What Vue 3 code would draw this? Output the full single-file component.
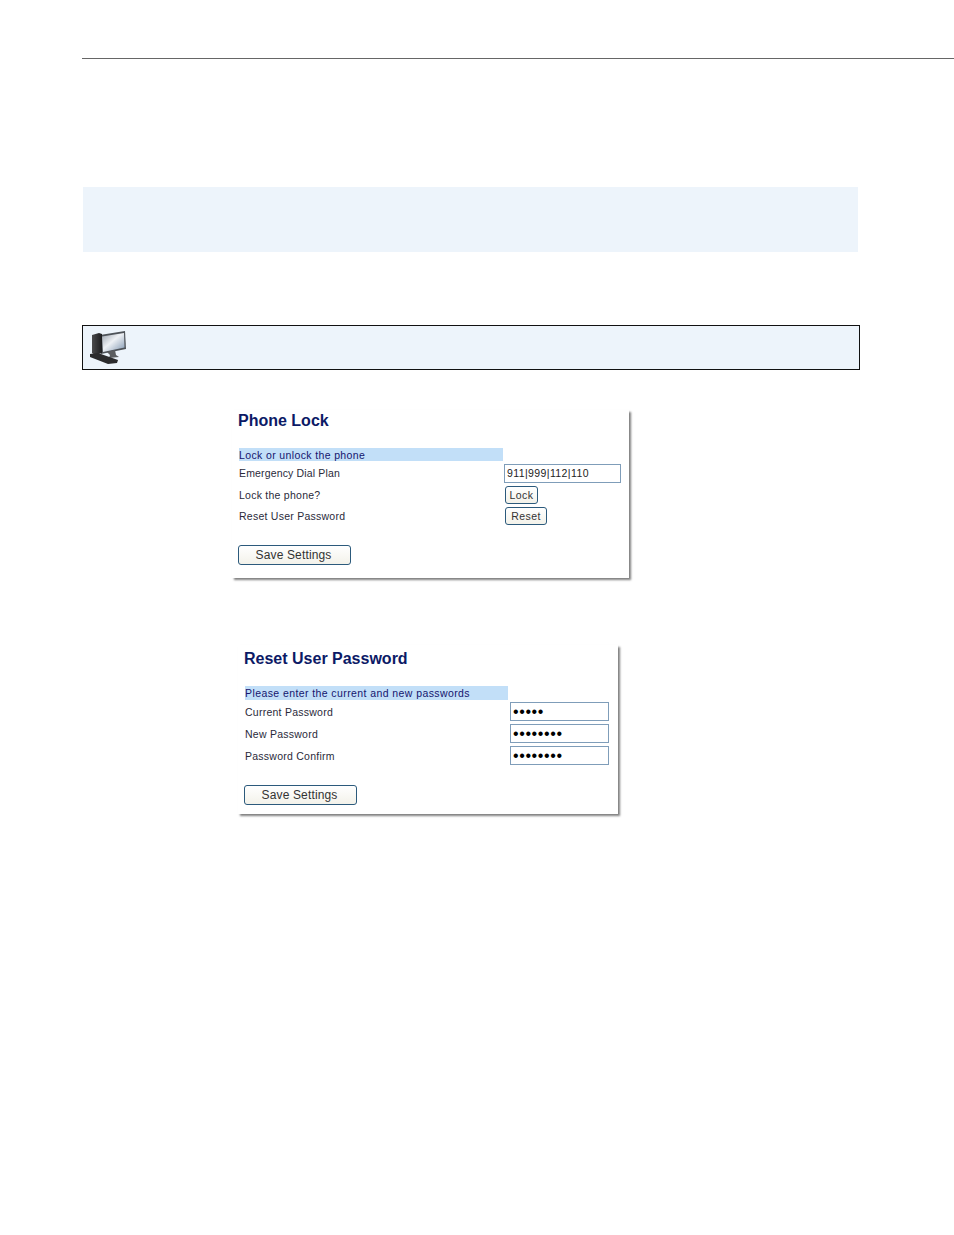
<script setup>
const lockRows = [
  { label: 'Lock the phone?', button: 'Lock', cls: 'btn-lock' },
  { label: 'Reset User Password', button: 'Reset', cls: 'btn-reset' }
]

const passwordRows = [
  { label: 'Current Password', value: '•••••' },
  { label: 'New Password', value: '••••••••' },
  { label: 'Password Confirm', value: '••••••••' }
]
</script>

<template>
  <div class="page">
    <div class="rule"></div>
    <div class="band"></div>
    <div class="note">
      <svg class="note-icon" width="38" height="36" viewBox="0 0 38 36">
        <defs>
          <linearGradient id="screen" x1="0" y1="0" x2="1" y2="1">
            <stop offset="0" stop-color="#9aa2ad" />
            <stop offset="0.45" stop-color="#eef1f5" />
            <stop offset="1" stop-color="#7f95b0" />
          </linearGradient>
          <linearGradient id="tower" x1="0" y1="0" x2="1" y2="0">
            <stop offset="0" stop-color="#4a4a4c" />
            <stop offset="1" stop-color="#1d1d1f" />
          </linearGradient>
        </defs>
        <path d="M10 5 L35 1 L36 19 L11 24 Z" fill="#4d5258" />
        <path d="M12 6.500 L34 3 L34.500 17.500 L13 22 Z" fill="url(#screen)" />
        <path d="M2 5 L9 3 L12 4 L12 23 L5 25 L2 23 Z" fill="url(#tower)" />
        <path d="M17 22 L25 20 L26 25 L29 27 L19 28 L20 25 Z" fill="#5b5d60" />
        <path d="M0 24 L8 23 L28 30 L27 33 L18 34 L0 27 Z" fill="#2b2b2d" />
      </svg>
    </div>

    <section class="panel panel-lock">
      <h2 class="title">Phone Lock</h2>
      <div class="section-bar">Lock or unlock the phone</div>
      <div class="row row-plan">
        <span class="label">Emergency Dial Plan</span>
        <div class="field field-plan">911|999|112|110</div>
      </div>
      <div v-for="row in lockRows" :key="row.label" class="row row-action">
        <span class="label">{{ row.label }}</span>
        <button class="btn" :class="row.cls">{{ row.button }}</button>
      </div>
      <button class="btn btn-save">Save Settings</button>
    </section>

    <section class="panel panel-password">
      <h2 class="title">Reset User Password</h2>
      <div class="section-bar">Please enter the current and new passwords</div>
      <div class="rows">
        <div v-for="row in passwordRows" :key="row.label" class="row row-password">
          <span class="label">{{ row.label }}</span>
          <div class="field field-password">{{ row.value }}</div>
        </div>
      </div>
      <button class="btn btn-save">Save Settings</button>
    </section>
  </div>
</template>

<style scoped>
.page {
  width: 954px;
  height: 1235px;
  padding-top: 58px;
  box-sizing: border-box;
  overflow: hidden;
  background: #fff;
  font-family: "Liberation Sans", Arial, sans-serif;
}
.rule {
  height: 1px;
  margin-left: 82px;
  background: #666;
}
.band {
  width: 775px;
  height: 65px;
  margin: 128px 0 0 83px;
  background: #edf4fb;
}
.note {
  display: flex;
  align-items: center;
  box-sizing: border-box;
  width: 778px;
  height: 45px;
  margin: 73px 0 0 82px;
  padding-left: 7px;
  background: #edf4fb;
  border: 1px solid #111;
}
.note-icon {
  filter: blur(0.4px);
}
.panel {
  box-sizing: border-box;
  background: #fff;
  box-shadow: 2px 2px 2px rgba(0, 0, 0, 0.5);
}
.panel-lock {
  width: 397px;
  height: 168px;
  margin: 40px 0 0 232px;
  padding: 1px 0 0 6px;
}
.panel-password {
  width: 380px;
  height: 169px;
  margin: 67px 0 0 238px;
  padding: 4px 0 0 6px;
}
.title {
  margin: 0;
  height: 20px;
  font-size: 16px;
  line-height: 20px;
  font-weight: 700;
  color: #0c1a66;
}
.section-bar {
  width: 264px;
  height: 13px;
  margin: 17px 0 0 1px;
  font-size: 10.5px;
  line-height: 14px;
  letter-spacing: 0.37px;
  color: #15156e;
  background: #c2dff8;
}
.panel-password .section-bar {
  width: 263px;
  height: 14px;
  margin-top: 17px;
  letter-spacing: 0.41px;
}
.rows {
  display: flex;
  flex-direction: column;
  gap: 3px;
  margin-top: 2px;
}
.row {
  display: flex;
  align-items: center;
  margin-left: 1px;
}
.row-plan {
  height: 19px;
  margin-top: 3px;
}
.row-plan .label {
  padding-bottom: 1px;
  letter-spacing: 0.15px;
}
.row-action {
  height: 18px;
  margin-top: 3px;
}
.row-password {
  height: 19px;
}
.label {
  width: 265px;
  flex: none;
  font-size: 10.5px;
  letter-spacing: 0.25px;
  color: #2a2a3a;
}
.field {
  box-sizing: border-box;
  height: 19px;
  border: 1px solid #7f9db9;
  background: #fff;
  line-height: 17px;
  color: #222;
}
.field-plan {
  width: 117px;
  padding-left: 2px;
  font-size: 10.5px;
  letter-spacing: 0.4px;
}
.field-password {
  width: 99px;
  padding-left: 2px;
  font-size: 16px;
  letter-spacing: 0.6px;
  color: #000;
}
.btn {
  box-sizing: border-box;
  padding: 0;
  height: 18px;
  font-family: inherit;
  font-size: 10.5px;
  letter-spacing: 0.45px;
  color: #333;
  background: linear-gradient(#fff, #f3f2ea);
  border: 1px solid #2c5a7c;
  border-radius: 3px;
}
.btn-lock {
  width: 33px;
  margin-left: 1px;
}
.btn-reset {
  width: 42px;
  margin-left: 1px;
}
.btn-save {
  display: block;
  width: 113px;
  height: 20px;
  margin-top: 20px;
  padding: 0 2px 1px 0;
  font-size: 12px;
  letter-spacing: 0.15px;
}
</style>
